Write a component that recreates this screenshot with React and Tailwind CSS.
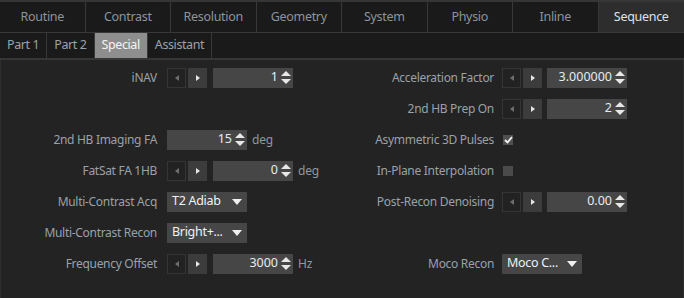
import React from "react";

const F = { fontFamily: '"Noto Sans", "Open Sans", sans-serif' };

function LeftBtn() {
  return (
    <div className="w-[19px] h-[20px] border border-[#353535] bg-[#222] flex items-center justify-center">
      <svg width="4" height="6" viewBox="0 0 4 6"><path d="M4 0 L0 3 L4 6 Z" fill="#6e6e6e" /></svg>
    </div>
  );
}
function RightBtn() {
  return (
    <div className="w-[19px] h-[20px] bg-[#3c3c3c] flex items-center justify-center">
      <svg width="4" height="6" viewBox="0 0 4 6"><path d="M0 0 L4 3 L0 6 Z" fill="#e6e6e6" /></svg>
    </div>
  );
}
function Spinner() {
  return (
    <svg width="10" height="15" viewBox="0 0 10 15" className="shrink-0">
      <path d="M0 6 L5 1 L10 6 Z" fill="#e8e8e8" />
      <path d="M0 9 L5 14 L10 9 Z" fill="#e8e8e8" />
    </svg>
  );
}
function NumField({ value, w = "w-[80px]" }) {
  return (
    <div className={`${w} h-[20px] bg-[#464646] flex items-center justify-end pr-[2px] gap-[3px]`}>
      <span className="text-[12.5px] text-[#e4ecf2] leading-none">{value}</span>
      <Spinner />
    </div>
  );
}
function Stepper({ value, gap = "ml-[6px]" }) {
  return (
    <div className="flex items-center">
      <LeftBtn />
      <div className="ml-[2px]"><RightBtn /></div>
      <div className={gap}><NumField value={value} /></div>
    </div>
  );
}
function Dropdown({ value, w = "w-[80px]" }) {
  return (
    <div className={`${w} h-[20px] bg-[#464646] flex items-center justify-between pl-[5px] pr-[5px]`}>
      <span className="text-[12.5px] tracking-[-0.3px] text-[#eef2f5] leading-none">{value}</span>
      <svg width="10" height="6" viewBox="0 0 10 6"><path d="M0 0 L10 0 L5 6 Z" fill="#f0f0f0" /></svg>
    </div>
  );
}
function Unit({ children }) {
  return <span className="ml-[5px] text-[12px] tracking-[-0.2px] text-[#9098a0]">{children}</span>;
}

function LeftCell({ label, children }) {
  return (
    <div className="w-[342px] flex items-center">
      <div className="w-[156px] text-right text-[12px] tracking-[-0.3px] text-[#9aa1a9] whitespace-nowrap">{label}</div>
      <div className="ml-[10px] flex items-center">{children}</div>
    </div>
  );
}
function RightCell({ label, children }) {
  return (
    <div className="flex-1 flex items-center">
      <div className="w-[151px] text-right text-[12px] tracking-[-0.3px] text-[#9aa1a9] whitespace-nowrap">{label}</div>
      <div className="ml-[8px] flex items-center">{children}</div>
    </div>
  );
}
function Row({ children }) {
  return <div className="h-[31px] flex items-center">{children}</div>;
}

export default function App() {
  const tabs = ["Routine", "Contrast", "Resolution", "Geometry", "System", "Physio", "Inline", "Sequence"];
  const sub = ["Part 1", "Part 2", "Special", "Assistant"];
  return (
    <div style={F} className="w-[684px] h-[298px] bg-[#232323] flex flex-col overflow-hidden border-t-2 border-[#363636]">
      <div className="h-[31px] grid grid-cols-8 bg-[#1a1a1a] border-b border-[#383838]">
        {tabs.map((t, i) => (
          <div
            key={t}
            className={`flex items-center justify-center text-[12.5px] tracking-[-0.3px] ${i < 7 ? "border-r border-[#383838]" : ""} ${
              t === "Sequence" ? "bg-[#2d2d2d] text-[#dbe3ea]" : "text-[#8c949c]"
            }`}
          >
            {t}
          </div>
        ))}
      </div>
      <div className="h-[27px] flex bg-[#1a1a1a] border-b-2 border-[#363636]">
        {sub.map((t) => (
          <div
            key={t}
            className={`px-[7px] flex items-center text-[12.5px] tracking-[-0.4px] border-r border-[#383838] ${
              t === "Special" ? "bg-[#8e8e8e] text-[#f4f4f4]" : "text-[#9aa2aa]"
            }`}
          >
            {t}
          </div>
        ))}
      </div>
      <div className="flex-1 flex flex-col pt-[2px] border-x border-[#2e2e2e]">
        <Row>
          <LeftCell label="iNAV"><Stepper value="1" /></LeftCell>
          <RightCell label="Acceleration Factor"><Stepper value="3.000000" gap="ml-[5px]" /></RightCell>
        </Row>
        <Row>
          <LeftCell label="" />
          <RightCell label="2nd HB Prep On"><Stepper value="2" gap="ml-[5px]" /></RightCell>
        </Row>
        <Row>
          <LeftCell label="2nd HB Imaging FA"><NumField value="15" /><Unit>deg</Unit></LeftCell>
          <RightCell label="Asymmetric 3D Pulses">
            <div className="ml-[1px] w-[10px] h-[10px] bg-[#505050] flex items-center justify-center">
              <svg width="9" height="8" viewBox="0 0 9 8"><path d="M1 4 L3.5 6.5 L8 1" stroke="#f4f4f4" strokeWidth="1.8" fill="none" /></svg>
            </div>
          </RightCell>
        </Row>
        <Row>
          <LeftCell label="FatSat FA 1HB"><Stepper value="0" /><Unit>deg</Unit></LeftCell>
          <RightCell label="In-Plane Interpolation">
            <div className="ml-[1px] w-[10px] h-[10px] bg-[#4a4a4a]" />
          </RightCell>
        </Row>
        <Row>
          <LeftCell label="Multi-Contrast Acq"><Dropdown value="T2 Adiab" /></LeftCell>
          <RightCell label="Post-Recon Denoising"><Stepper value="0.00" gap="ml-[5px]" /></RightCell>
        </Row>
        <Row>
          <LeftCell label="Multi-Contrast Recon"><Dropdown value="Bright+..." /></LeftCell>
          <RightCell label="" />
        </Row>
        <Row>
          <LeftCell label="Frequency Offset"><Stepper value="3000" /><Unit>Hz</Unit></LeftCell>
          <RightCell label="Moco Recon"><Dropdown value="Moco C..." /></RightCell>
        </Row>
      </div>
    </div>
  );
}
